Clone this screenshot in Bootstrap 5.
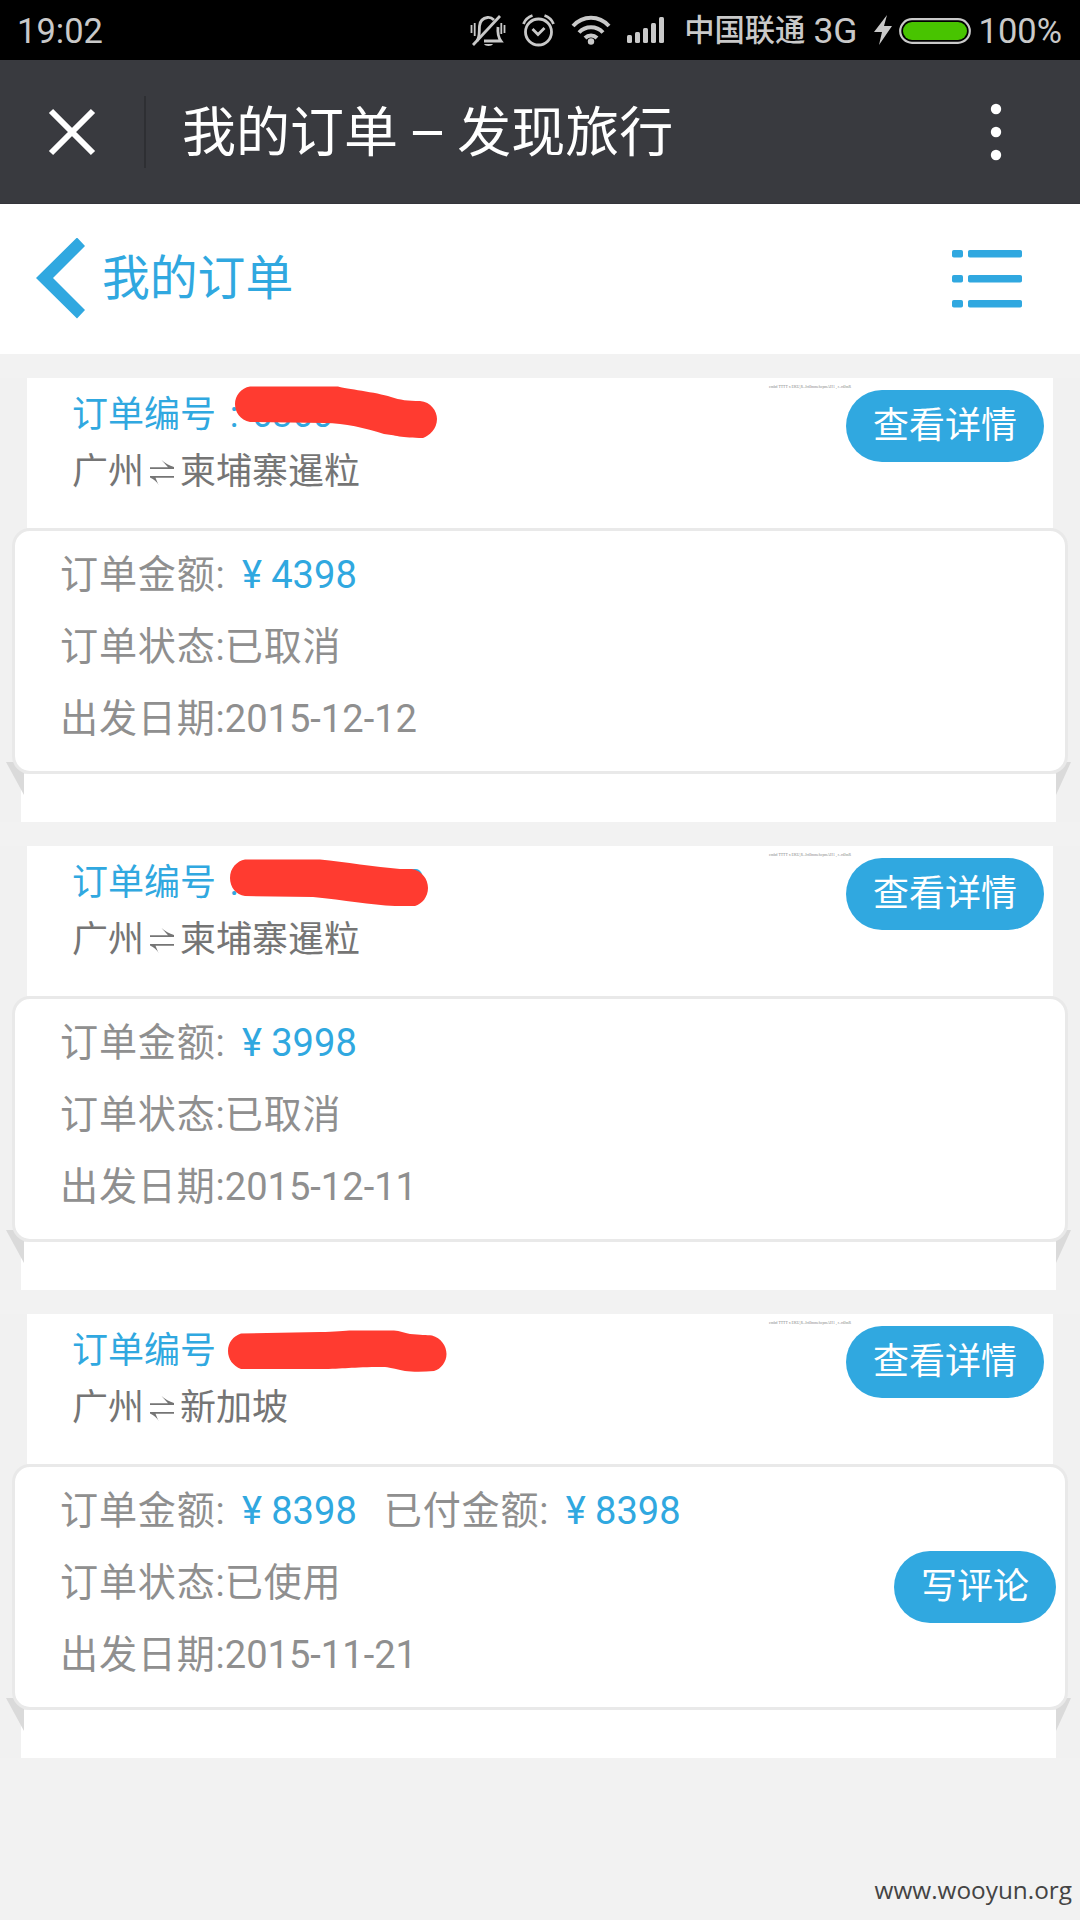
<!DOCTYPE html>
<html lang="zh-CN">
<head>
<meta charset="utf-8">
<meta name="viewport" content="width=device-width, initial-scale=1">
<title>我的订单 – 发现旅行</title>
<link href="https://cdn.jsdelivr.net/npm/bootstrap@5.3.0/dist/css/bootstrap.min.css" rel="stylesheet">
<style>
:root{--sky:#30a8e0}
body{width:1080px;height:1920px;overflow:hidden;background:#f2f2f2;font-family:Roboto,"Noto Sans CJK SC",sans-serif}
svg{display:block;flex:none}
.status-bar{height:60px;background:#000;color:#c9c9c9;font-size:34.5px;line-height:60px;padding:1px 18px 0 17px}
.status-icon{margin-left:16px;margin-top:-1px}
.carrier{font-size:30.3px;font-weight:500;margin-left:19px}
.network{font-size:35.5px;margin-left:8px}
.title-bar{height:144px;background:#393a3f;border-bottom:1px solid #34343a;color:#fff;padding:0 60px 0 48px}
.title-rule{width:2px;height:72px;background:#2e2f33;margin-left:48px}
.title-text{font-size:54px;line-height:72px;margin-left:36px;padding-top:4px;word-spacing:-1.5px}
.dash{display:inline-block;transform:scaleX(1.1)}
.page-bar{height:150px;color:var(--sky);padding:0 57px 0 36px}
.page-name{font-size:47.8px;line-height:60px;margin-left:17px}
.order{margin-bottom:24px;background:#f1f1f1}
.order-head{height:150px;margin:0 27px;padding:6px 9px 0 45px;font-size:36px}
.order-text{padding-top:3px}
.order-no{color:var(--sky);line-height:57px}
.order-route{color:#757575;line-height:57px}
.colon{display:inline-block;width:36px;text-align:center}
.harpoon{display:inline-block;vertical-align:-1px;margin:0 6px}
.fine-print{font:3.85px/6px "Liberation Serif",serif;color:#888;width:83px;margin-right:-6px;white-space:nowrap}
.pill{--bs-btn-color:#fff;--bs-btn-bg:var(--sky);--bs-btn-hover-bg:#2797cc;--bs-btn-hover-color:#fff;background:var(--sky);color:#fff;border:0;height:72px;line-height:73px;padding:0 27px;font-size:36px}
.pill-top{margin-top:6px}
.pill-side{margin-top:-8px}
.smear{position:absolute;left:201px;top:0}
.order-body{position:relative;z-index:1;height:246px;margin:0 12px;padding:8px 9px 0 45px;border:3px solid #e9e9e9;border-radius:18px;color:#8f8f8f;font-size:38.1px;line-height:72px}
.han{letter-spacing:.8px}
.price{color:var(--sky);margin-left:-1.5px}
.yen{display:inline-block;width:38.5px;text-align:center}
.paid{margin-left:27px}
.order-foot{position:relative;height:48px;margin:0 24px 0 21px}
.fold{position:absolute;top:-12px}
.fold-l{left:-15px}.fold-r{right:-15px}
.hidden-gap{display:inline-block;width:132px}
.watermark{position:absolute;right:8px;bottom:13px;font:24.35px/34px "Open Sans",sans-serif;color:#444}
</style>
</head>
<body class="position-relative">

<div class="status-bar d-flex align-items-center">
  <span>19:02</span>
  <svg class="ms-auto" width="36" height="34" viewBox="0 0 36 34" fill="none" stroke="#c9c9c9" stroke-width="2.8">
    <path d="M7 27C10 23 9 18 9.500 12C10 7 13 4 17.500 3.500C20 3.200 22 4 24 6M28 13C27.500 18 28 23 31 27H14"/>
    <path d="M3 31 30 2"/><path d="M1.500 11v8M4.700 9v13M34.500 11v8M31.300 9v11" stroke-width="1.800"/>
    <path d="M14 30h9c-1 2.500-8 2.500-9 0z" fill="#c9c9c9" stroke="none"/>
  </svg>
  <svg class="status-icon" width="33" height="34" viewBox="0 0 33 34" fill="none" stroke="#c9c9c9" stroke-width="2.800">
    <circle cx="16.500" cy="19" r="13"/><path d="M10.500 16 16 21.500 22.500 15M1.500 11C3 7 6 4 10.500 2.500M31.500 11C30 7 27 4 22.500 2.500"/>
  </svg>
  <svg class="status-icon" width="40" height="30" viewBox="0 0 40 30" fill="none" stroke="#c9c9c9" stroke-width="4">
    <path d="M2 11C12 0 28 0 38 11M8 17.500C14.500 10.500 25.500 10.500 32 17.500M14 23C17.500 19.500 22.500 19.500 26 23"/><circle cx="20" cy="26.500" r="3.200" fill="#c9c9c9" stroke="none"/>
  </svg>
  <svg class="status-icon" width="38" height="28" viewBox="0 0 38 28" fill="#c9c9c9">
    <rect x="0" y="19" width="5" height="8" rx="1.500"/><rect x="8" y="16" width="5" height="11" rx="1.500"/><rect x="16" y="12" width="5" height="15" rx="1.500"/><rect x="24" y="7" width="5" height="20" rx="1.500"/><rect x="32" y="1" width="5" height="26" rx="1.500"/>
  </svg>
  <span class="carrier">中国联通</span><span class="network">3G</span>
  <svg class="status-icon" width="18" height="30" viewBox="0 0 18 30" fill="#c9c9c9"><path d="M13 0 0 17H8L5 30 18 11H10Z"/></svg>
  <svg width="72" height="26" viewBox="0 0 72 26" style="margin-left:7px"><rect x="1.200" y="1.200" width="69.600" height="23.600" rx="11.800" fill="none" stroke="#c9c9c9" stroke-width="2.200"/><rect x="4" y="4" width="64" height="18" rx="9" fill="#48c400"/></svg>
  <span class="ms-2">100%</span>
</div>

<div class="title-bar d-flex align-items-center">
  <svg width="48" height="48" viewBox="0 0 48 48" stroke="#fff" stroke-width="6"><path d="M3 3 45 45M45 3 3 45"/></svg>
  <div class="title-rule"></div>
  <div class="title-text">我的订单 <span class="dash">–</span> 发现旅行</div>
  <svg class="ms-auto" width="48" height="60" viewBox="0 0 48 60" fill="#fff"><circle cx="24" cy="7" r="5.200"/><circle cx="24" cy="30" r="5.200"/><circle cx="24" cy="53" r="5.200"/></svg>
</div>

<div class="page-bar bg-white d-flex align-items-center">
  <svg width="49" height="82" viewBox="0 1 49 82" fill="#30a8e0"><path d="M41 .5 49 9 17 41 49 73 41 81.500 0 41Z"/></svg>
  <div class="page-name">我的订单</div>
  <svg class="ms-auto" width="71" height="58" viewBox="0 0 71 58" fill="#30a8e0"><rect x="0" y="0" width="11" height="7.500" rx="1.800"/><rect x="16" y="0" width="54" height="7.500" rx="1.800"/><rect x="0" y="25" width="11" height="7.500" rx="1.800"/><rect x="16" y="25" width="54" height="7.500" rx="1.800"/><rect x="0" y="50" width="11" height="7.500" rx="1.800"/><rect x="16" y="50" width="54" height="7.500" rx="1.800"/></svg>
</div>

<main class="pt-4">
  <section class="order">
    <div class="order-head bg-white position-relative d-flex align-items-start">
      <div class="order-text me-auto"><div class="order-no">订单编号<span class="colon">:</span>6360</div><div class="order-route">广州<svg class="harpoon" role="img" aria-label="⇌" width="24" height="25" viewBox="0 0 24 25" fill="#757575"><path d="M0 7.300H18L11.500 0Q17 5 24 7V9H0ZM24 16H0V17.500Q6 20 8.500 25L5.500 17.800H24Z"/></svg>柬埔寨暹粒</div></div>
      <div class="fine-print">cmbd TTTT x EKU,R–JrdJmmehcpmAH1 , r–rdJmR</div>
      <button class="btn pill pill-top rounded-pill">查看详情</button>
      <svg class="smear" width="240" height="64" viewBox="228 378 240 64" fill="#ff3b30"><path d="M250 386.500H338C346 389 376 392 391 397C400 400 408 401 420 401C431 402 437 411 437 419C437 429 429 436 423 438C402 438 394 435 384 434C365 428 345 423 325 423L250 422C240 420 235 412 235 404C235 396 241 388 250 386.500Z"/></svg>
    </div>
    <div class="order-body bg-white">
      <div><span class="han">订单金额</span>: <span class="price"><span class="yen">¥</span>4398</span></div>
      <div><span class="han">订单状态</span>:<span class="han">已取消</span></div>
      <div><span class="han">出发日期</span>:2015-12-12</div>
    </div>
    <div class="order-foot bg-white">
      <svg class="fold fold-l" width="18" height="33" viewBox="0 0 18 33"><path d="M0 0H18V33Z" fill="#dadada"/></svg>
      <svg class="fold fold-r" width="15" height="33" viewBox="0 0 15 33"><path d="M0 0H15L0 33Z" fill="#dadada"/></svg>
    </div>
  </section>

  <section class="order">
    <div class="order-head bg-white position-relative d-flex align-items-start">
      <div class="order-text me-auto"><div class="order-no">订单编号<span class="colon">:</span><span class="hidden-gap"></span>70</div><div class="order-route">广州<svg class="harpoon" role="img" aria-label="⇌" width="24" height="25" viewBox="0 0 24 25" fill="#757575"><path d="M0 7.300H18L11.500 0Q17 5 24 7V9H0ZM24 16H0V17.500Q6 20 8.500 25L5.500 17.800H24Z"/></svg>柬埔寨暹粒</div></div>
      <div class="fine-print">cmbd TTTT x EKU,R–JrdJmmehcpmAH1 , r–rdJmR</div>
      <button class="btn pill pill-top rounded-pill">查看详情</button>
      <svg class="smear" width="240" height="64" viewBox="228 846 240 64" fill="#ff3b30"><path d="M245 859.500H320C345 862 375 867 400 869H412C422 871 428 879 428 888C428 897 422 904 415 906H395C370 905 345 900 313 897L245 896C236 895 230 887 230 878C230 868 237 861 245 859.500Z"/></svg>
    </div>
    <div class="order-body bg-white">
      <div><span class="han">订单金额</span>: <span class="price"><span class="yen">¥</span>3998</span></div>
      <div><span class="han">订单状态</span>:<span class="han">已取消</span></div>
      <div><span class="han">出发日期</span>:2015-12-11</div>
    </div>
    <div class="order-foot bg-white">
      <svg class="fold fold-l" width="18" height="33" viewBox="0 0 18 33"><path d="M0 0H18V33Z" fill="#dadada"/></svg>
      <svg class="fold fold-r" width="15" height="33" viewBox="0 0 15 33"><path d="M0 0H15L0 33Z" fill="#dadada"/></svg>
    </div>
  </section>

  <section class="order">
    <div class="order-head bg-white position-relative d-flex align-items-start">
      <div class="order-text me-auto"><div class="order-no">订单编号<span class="colon">:</span></div><div class="order-route">广州<svg class="harpoon" role="img" aria-label="⇌" width="24" height="25" viewBox="0 0 24 25" fill="#757575"><path d="M0 7.300H18L11.500 0Q17 5 24 7V9H0ZM24 16H0V17.500Q6 20 8.500 25L5.500 17.800H24Z"/></svg>新加坡</div></div>
      <div class="fine-print">cmbd TTTT x EKU,R–JrdJmmehcpmAH1 , r–rdJmR</div>
      <button class="btn pill pill-top rounded-pill">查看详情</button>
      <svg class="smear" width="240" height="64" viewBox="228 1314 240 64" fill="#ff3b30"><path d="M241 1333.500L320 1332C335 1332 345 1330.500 352 1330.500H394C400 1331 404 1333 410 1334C420 1335 427 1335 432 1335.500C441 1338 446.500 1346 446.500 1354C446.500 1362 441 1369 434 1371C424 1372 412 1372 405 1371C395 1369 388 1367 383 1367C350 1367 345 1369 320 1369H241C233 1366 228 1359 228 1351C228 1343 233 1336 241 1333.500Z"/></svg>
    </div>
    <div class="order-body bg-white d-flex">
      <div class="me-auto">
        <div><span class="han">订单金额</span>: <span class="price"><span class="yen">¥</span>8398</span><span class="han paid">已付金额</span>: <span class="price"><span class="yen">¥</span>8398</span></div>
        <div><span class="han">订单状态</span>:<span class="han">已使用</span></div>
        <div><span class="han">出发日期</span>:2015-11-21</div>
      </div>
      <button class="btn pill pill-side rounded-pill align-self-center">写评论</button>
    </div>
    <div class="order-foot bg-white">
      <svg class="fold fold-l" width="18" height="33" viewBox="0 0 18 33"><path d="M0 0H18V33Z" fill="#dadada"/></svg>
      <svg class="fold fold-r" width="15" height="33" viewBox="0 0 15 33"><path d="M0 0H15L0 33Z" fill="#dadada"/></svg>
    </div>
  </section>
</main>
<div class="watermark">www.wooyun.org</div>
<script src="https://cdn.jsdelivr.net/npm/bootstrap@5.3.0/dist/js/bootstrap.bundle.min.js"></script>
</body>
</html>
